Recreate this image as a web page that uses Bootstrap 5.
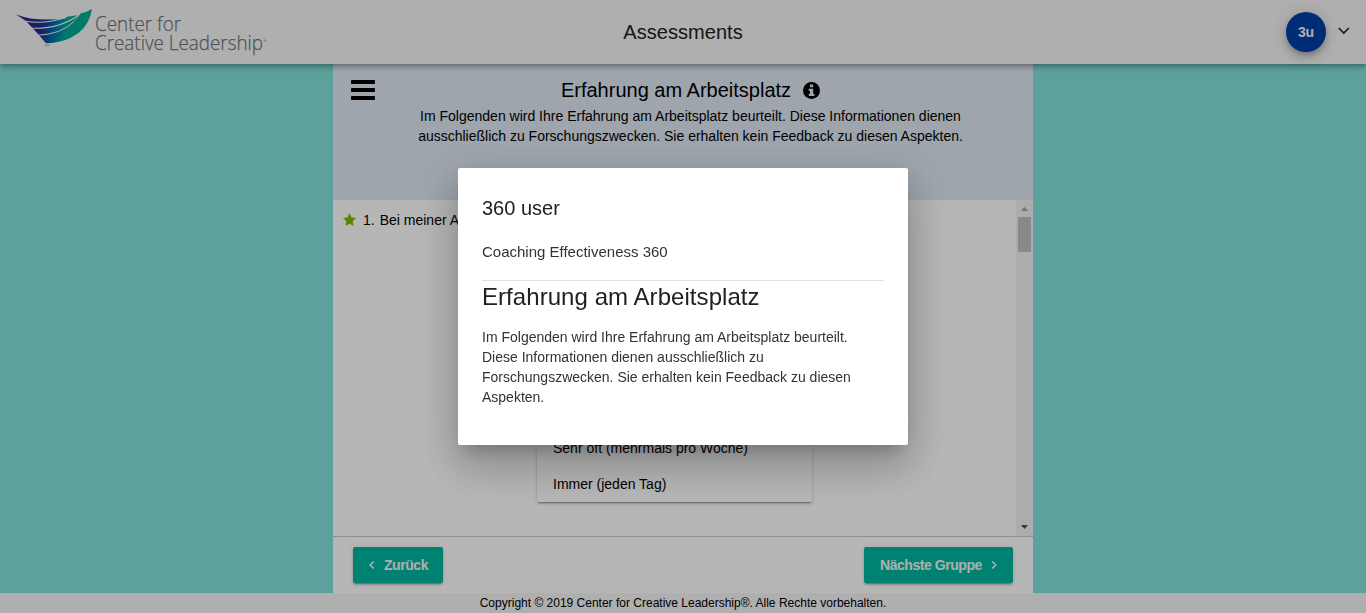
<!DOCTYPE html>
<html lang="de">
<head>
<meta charset="utf-8">
<meta name="viewport" content="width=device-width, initial-scale=1">
<title>Assessments</title>
<link href="https://cdn.jsdelivr.net/npm/bootstrap@5.3.0/dist/css/bootstrap.min.css" rel="stylesheet">
<style>
body{font-family:"Liberation Sans",Arial,sans-serif;font-size:14px;line-height:20px;color:#000;background:#81e2da}
h1,h2,h3,p{margin:0;font-weight:400}
.topbar{height:64px;background:#f5f5f5;box-shadow:0 2px 4px -1px rgba(0,0,0,.2),0 4px 5px rgba(0,0,0,.14),0 1px 10px rgba(0,0,0,.12);z-index:2}
.side{width:350px}
.brand{width:256px;height:54px;margin:4px 0 0 14px}
.apptitle{font-size:20px;line-height:24px;color:#212121;letter-spacing:.05px}
.avatar{width:40px;height:40px;background:#003da7;color:#f5f5f5;font-size:14px;font-weight:700;letter-spacing:-.2px;box-shadow:0 3px 5px -1px rgba(0,0,0,.2),0 6px 10px rgba(0,0,0,.14),0 1px 18px rgba(0,0,0,.12)}
.sheet{width:700px;background:#fff}
.intro{height:136px;background:#dfe8f3}
.burger{width:24px;height:20px;margin:16px 0 0 18px}
.intro-text{width:600px;padding:12px 0 0 1px;margin-right:43px}
.intro h2{font-size:20px;line-height:28px}
.intro p{line-height:20px;margin-top:2px}
.questions{height:336px}
.star{width:14px;height:14px}
.options{width:275px;margin-top:92px;margin-left:204px;border-radius:2px;box-shadow:0 3px 1px -2px rgba(0,0,0,.2),0 2px 2px rgba(0,0,0,.14),0 1px 5px rgba(0,0,0,.12)}
.option{height:36px;line-height:36px;padding-left:16px}
.rail{width:17px;background:#f1f1f1}
.rail .thumb{width:13px;height:35px;background:#c1c1c1}
.rail svg{width:17px;height:17px}
.actions{height:57px;border-top:1px solid #c8c8c8;padding:0 20px}
.act{height:36px;background:#00b7a0;color:#f5f5f5;font-size:14px;font-weight:700;letter-spacing:-.45px;border-radius:2px;box-shadow:0 3px 1px -2px rgba(0,0,0,.2),0 2px 2px rgba(0,0,0,.14),0 1px 5px rgba(0,0,0,.12)}
.legal{height:20px;background:#f5f5f5;font-size:12px;line-height:20px}
.shade{position:fixed;inset:0;background:rgba(0,0,0,.288);z-index:10}
.dialog{width:450px;height:277px;padding:24px;background:#fff;color:#212121;border-radius:2px;box-shadow:0 11px 15px -7px rgba(0,0,0,.2),0 24px 38px 3px rgba(0,0,0,.14),0 9px 46px 8px rgba(0,0,0,.12)}
.dialog .who{font-size:20px;line-height:32px}
.dialog .kind{font-size:15px;line-height:24px;margin-top:16px;color:#333}
.dialog .rule{height:1px;background:#e0e0e0;margin-top:16px}
.dialog h2{font-size:24px;line-height:32px;letter-spacing:.06px}
.dialog .body-text{color:#333;margin-top:14px}
</style>
</head>
<body class="overflow-hidden">
<div class="vh-100 d-flex flex-column">
  <header class="topbar d-flex justify-content-between align-items-center position-relative flex-shrink-0">
    <div class="side align-self-start">
      <svg class="brand d-block" viewBox="14 4 256 54">
        <defs><linearGradient id="wing" gradientUnits="userSpaceOnUse" x1="28" y1="18" x2="86" y2="30">
          <stop offset="0" stop-color="#282a86"/><stop offset=".28" stop-color="#1d3190"/><stop offset=".45" stop-color="#0068ae"/><stop offset=".65" stop-color="#00a69b"/><stop offset="1" stop-color="#00b18f"/></linearGradient></defs>
        <path fill="url(#wing)" d="M16 14.500C30 20 46 20.500 65 18.500L67 16.700L79 15L81 13.200Q87 12 92 9C89 27 76 42 46 43.300L37.500 33.500L31.500 27L26 21Z"/>
        <g fill="none" stroke="#f5f5f5" stroke-width="1.100"><path d="M25 21.300Q46 24.500 66 17.300"/><path d="M31 28.200Q60 29.500 80 14"/><path d="M37 35.300Q61 34.500 74 21.500" stroke-width="1"/><path d="M74 21.500L79 15.500" stroke-width=".5"/></g>
        <g font-family="Open Sans,sans-serif" font-weight="300" font-size="21" fill="#717579" stroke="#717579" stroke-width=".25">
          <text x="95" y="30.500" textLength="86" lengthAdjust="spacingAndGlyphs">Center for</text>
          <text x="95" y="50" textLength="168" lengthAdjust="spacingAndGlyphs">Creative Leadership</text></g>
        <circle cx="264.800" cy="40.500" r=".8" fill="none" stroke="#717579" stroke-width=".5"/>
        <path d="M45 44.800h1.600M45.800 44.800v1.500M47.300 46.300v-1.500l.8 1 .8-1v1.500" fill="none" stroke="#7a8086" stroke-width=".5"/>
      </svg>
    </div>
    <h1 class="apptitle">Assessments</h1>
    <div class="side d-flex justify-content-end align-items-center">
      <div class="avatar rounded-circle d-flex align-items-center justify-content-center">3u</div>
      <svg class="ms-2" width="32" height="24" viewBox="0 0 32 24" fill="none" stroke="#222" stroke-width="1.600"><path d="M4.800 8l5 5l5-5"/></svg>
    </div>
  </header>
  <main class="sheet mx-auto d-flex flex-column flex-shrink-0">
    <section class="intro d-flex justify-content-between">
      <svg class="burger" viewBox="0 0 24 20"><rect width="24" height="4" rx=".8"/><rect y="8" width="24" height="4" rx=".8"/><rect y="16" width="24" height="4" rx=".8"/></svg>
      <div class="intro-text text-center">
        <h2 class="d-flex justify-content-center align-items-center"><span>Erfahrung am Arbeitsplatz</span>
          <svg style="margin-left:12px" width="17" height="17" viewBox="0 0 17 17"><circle cx="8.500" cy="8.500" r="8.500"/><path fill="#dfe8f3" d="M7 2.500h3.200v2.700H7zM5.800 6.700h4.400v5h1.200v2.200H5.800v-2.200H7V8.900H5.800z"/></svg></h2>
        <p>Im Folgenden wird Ihre Erfahrung am Arbeitsplatz beurteilt. Diese Informationen dienen<br>ausschließlich zu Forschungszwecken. Sie erhalten kein Feedback zu diesen Aspekten.</p>
      </div>
    </section>
    <section class="questions d-flex">
      <div class="flex-fill overflow-hidden">
        <div class="d-flex align-items-center" style="padding:10px 0 0 10px">
          <svg class="star" viewBox="0 0 14 14"><path fill="#80b900" d="M6.500 0l2 4.400 4.500.6-3.300 3.200.8 4.800-4-2.300L2.500 13l.8-4.800L0 5l4.500-.6z"/></svg>
          <span style="margin-left:6px">1.</span><span style="margin-left:5px">Bei meiner Arbeit</span>
        </div>
        <div class="options">
          <div class="option">&nbsp;</div><div class="option">&nbsp;</div><div class="option">&nbsp;</div>
          <div class="option">Sehr oft (mehrmals pro Woche)</div>
          <div class="option">Immer (jeden Tag)</div>
        </div>
      </div>
      <div class="rail d-flex flex-column align-items-center">
        <svg viewBox="0 0 17 17"><path fill="#a3a3a3" d="M5 11h7L8.500 7z"/></svg>
        <div class="thumb"></div>
        <svg class="mt-auto" viewBox="0 0 17 17"><path fill="#505050" d="M5 6h7l-3.500 4z"/></svg>
      </div>
    </section>
    <section class="actions d-flex justify-content-between align-items-center">
      <button class="act border-0 d-flex align-items-center" style="width:90px;padding:0 15px"><svg class="flex-shrink-0" width="8" height="10" viewBox="0 0 8 10" fill="none" stroke="#f5f5f5" stroke-width="1.600"><path d="M5.700 1.500L2.200 5l3.500 3.500"/></svg><span class="ms-2">Zurück</span></button>
      <button class="act border-0 d-flex align-items-center justify-content-between" style="width:149px;padding:0 14px 0 16px"><span>Nächste Gruppe</span><svg class="flex-shrink-0" width="8" height="10" viewBox="0 0 8 10" fill="none" stroke="#f5f5f5" stroke-width="1.600"><path d="M1.200 1.500L4.700 5L1.200 8.500"/></svg></button>
    </section>
  </main>
  <footer class="legal text-center">Copyright © 2019 Center for Creative Leadership®. Alle Rechte vorbehalten.</footer>
</div>
<div class="shade d-flex align-items-center justify-content-center">
  <div class="dialog" role="dialog">
    <h1 class="who">360 user</h1>
    <p class="kind">Coaching Effectiveness 360</p>
    <div class="rule"></div>
    <h2>Erfahrung am Arbeitsplatz</h2>
    <p class="body-text">Im Folgenden wird Ihre Erfahrung am Arbeitsplatz beurteilt.<br>Diese Informationen dienen ausschließlich zu<br>Forschungszwecken. Sie erhalten kein Feedback zu diesen<br>Aspekten.</p>
  </div>
</div>
<script src="https://cdn.jsdelivr.net/npm/bootstrap@5.3.0/dist/js/bootstrap.bundle.min.js"></script>
</body>
</html>
